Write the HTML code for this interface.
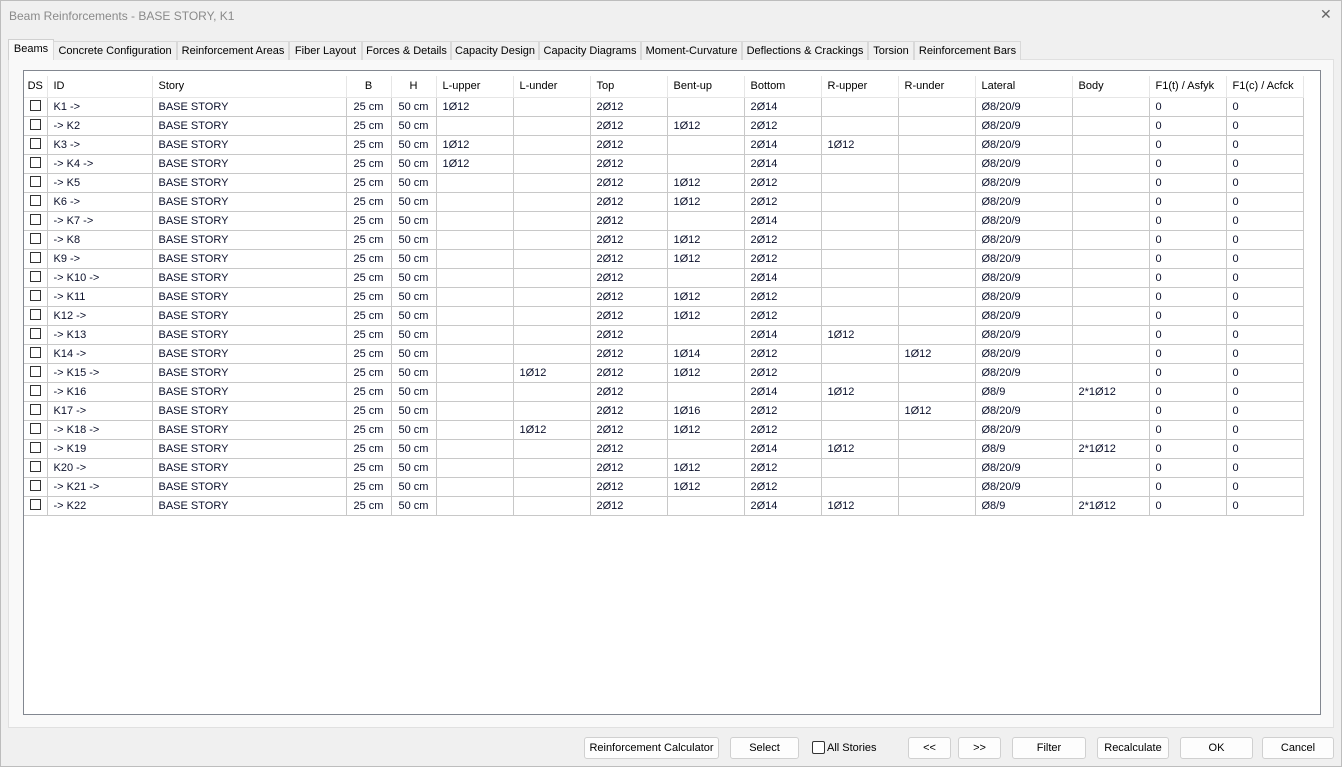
<!DOCTYPE html><html><head><style>
body{margin:0;width:1342px;height:767px;background:#f0f0f0;font-family:"Liberation Sans",sans-serif;font-size:11px;position:relative;overflow:hidden;color:#000}
.win{position:absolute;left:0;top:0;width:1340px;height:765px;border:1px solid #bdbdbd;background:#f0f0f0}
.title{position:absolute;left:9px;top:9px;font-size:12px;color:#8a8a8a}
.close{position:absolute;left:1320px;top:6px;font-size:14px;color:#666}
.tabs{position:absolute;top:40px;left:0;height:19px}
.tab{position:absolute;top:1px;height:18px;border:1px solid #d9d9d9;border-bottom:none;background:#f0f0f0;line-height:18px;text-align:center;white-space:nowrap;font-size:11px}
.tab.sel{top:-1px;height:20px;background:#f9f9f9;border-color:#d0d0d0}
.panel{position:absolute;left:8px;top:59px;width:1324px;height:667px;border:1px solid #e0e0e0;background:#f9f9f9}
.box{position:absolute;left:23px;top:70px;width:1296px;height:643px;border:1px solid #828790;background:#fff}
table{position:absolute;left:24px;top:76px;border-collapse:collapse;table-layout:fixed;color:#0a0f2a}
td{height:18px;padding:0 0 0 6px;border:1px solid #c8c8c8;white-space:nowrap;overflow:hidden;font-size:11px;line-height:18px}
tr.h td{border-color:#e6e6e6;border-top:none;height:21px;line-height:21px;color:#000}
td.c{text-align:center;padding:0}
td:first-child{border-left:none}
.cb{display:inline-block;width:9px;height:9px;border:1px solid #333;margin-top:2px;vertical-align:top}
tr.f td{border-top:1px dotted #000;border-bottom:1px dotted #000}
.btn{position:absolute;top:737px;height:20px;border:1px solid #d0d0d0;border-radius:3px;background:#fdfdfd;line-height:20px;text-align:center;font-size:11px}
</style></head><body><div class="win"></div>
<div class="title">Beam Reinforcements - BASE STORY, K1</div>
<div class="close">✕</div>
<div class="panel"></div>
<div class="tabs">
<div class="tab sel" style="left:8px;width:44px">Beams</div>
<div class="tab" style="left:53px;width:122px">Concrete Configuration</div>
<div class="tab" style="left:177px;width:110px">Reinforcement Areas</div>
<div class="tab" style="left:289px;width:71px">Fiber Layout</div>
<div class="tab" style="left:362px;width:87px">Forces &amp; Details</div>
<div class="tab" style="left:451px;width:86px">Capacity Design</div>
<div class="tab" style="left:539px;width:100px">Capacity Diagrams</div>
<div class="tab" style="left:641px;width:99px">Moment-Curvature</div>
<div class="tab" style="left:742px;width:124px">Deflections &amp; Crackings</div>
<div class="tab" style="left:868px;width:44px">Torsion</div>
<div class="tab" style="left:914px;width:105px">Reinforcement Bars</div>
</div>
<div class="box"></div>
<table>
<colgroup><col style="width:23px"><col style="width:105px"><col style="width:194px"><col style="width:45px"><col style="width:45px"><col style="width:77px"><col style="width:77px"><col style="width:77px"><col style="width:77px"><col style="width:77px"><col style="width:77px"><col style="width:77px"><col style="width:97px"><col style="width:77px"><col style="width:77px"><col style="width:77px"></colgroup>
<tr class="h"><td class="c">DS</td><td>ID</td><td>Story</td><td class="c">B</td><td class="c">H</td><td>L-upper</td><td>L-under</td><td>Top</td><td>Bent-up</td><td>Bottom</td><td>R-upper</td><td>R-under</td><td>Lateral</td><td>Body</td><td>F1(t) / Asfyk</td><td>F1(c) / Acfck</td></tr>
<tr class="f"><td class="c"><span class="cb"></span></td><td>K1 -&gt;</td><td>BASE STORY</td><td class="c">25 cm</td><td class="c">50 cm</td><td>1Ø12</td><td></td><td>2Ø12</td><td></td><td>2Ø14</td><td></td><td></td><td>Ø8/20/9</td><td></td><td>0</td><td>0</td></tr>
<tr><td class="c"><span class="cb"></span></td><td>-&gt; K2</td><td>BASE STORY</td><td class="c">25 cm</td><td class="c">50 cm</td><td></td><td></td><td>2Ø12</td><td>1Ø12</td><td>2Ø12</td><td></td><td></td><td>Ø8/20/9</td><td></td><td>0</td><td>0</td></tr>
<tr><td class="c"><span class="cb"></span></td><td>K3 -&gt;</td><td>BASE STORY</td><td class="c">25 cm</td><td class="c">50 cm</td><td>1Ø12</td><td></td><td>2Ø12</td><td></td><td>2Ø14</td><td>1Ø12</td><td></td><td>Ø8/20/9</td><td></td><td>0</td><td>0</td></tr>
<tr><td class="c"><span class="cb"></span></td><td>-&gt; K4 -&gt;</td><td>BASE STORY</td><td class="c">25 cm</td><td class="c">50 cm</td><td>1Ø12</td><td></td><td>2Ø12</td><td></td><td>2Ø14</td><td></td><td></td><td>Ø8/20/9</td><td></td><td>0</td><td>0</td></tr>
<tr><td class="c"><span class="cb"></span></td><td>-&gt; K5</td><td>BASE STORY</td><td class="c">25 cm</td><td class="c">50 cm</td><td></td><td></td><td>2Ø12</td><td>1Ø12</td><td>2Ø12</td><td></td><td></td><td>Ø8/20/9</td><td></td><td>0</td><td>0</td></tr>
<tr><td class="c"><span class="cb"></span></td><td>K6 -&gt;</td><td>BASE STORY</td><td class="c">25 cm</td><td class="c">50 cm</td><td></td><td></td><td>2Ø12</td><td>1Ø12</td><td>2Ø12</td><td></td><td></td><td>Ø8/20/9</td><td></td><td>0</td><td>0</td></tr>
<tr><td class="c"><span class="cb"></span></td><td>-&gt; K7 -&gt;</td><td>BASE STORY</td><td class="c">25 cm</td><td class="c">50 cm</td><td></td><td></td><td>2Ø12</td><td></td><td>2Ø14</td><td></td><td></td><td>Ø8/20/9</td><td></td><td>0</td><td>0</td></tr>
<tr><td class="c"><span class="cb"></span></td><td>-&gt; K8</td><td>BASE STORY</td><td class="c">25 cm</td><td class="c">50 cm</td><td></td><td></td><td>2Ø12</td><td>1Ø12</td><td>2Ø12</td><td></td><td></td><td>Ø8/20/9</td><td></td><td>0</td><td>0</td></tr>
<tr><td class="c"><span class="cb"></span></td><td>K9 -&gt;</td><td>BASE STORY</td><td class="c">25 cm</td><td class="c">50 cm</td><td></td><td></td><td>2Ø12</td><td>1Ø12</td><td>2Ø12</td><td></td><td></td><td>Ø8/20/9</td><td></td><td>0</td><td>0</td></tr>
<tr><td class="c"><span class="cb"></span></td><td>-&gt; K10 -&gt;</td><td>BASE STORY</td><td class="c">25 cm</td><td class="c">50 cm</td><td></td><td></td><td>2Ø12</td><td></td><td>2Ø14</td><td></td><td></td><td>Ø8/20/9</td><td></td><td>0</td><td>0</td></tr>
<tr><td class="c"><span class="cb"></span></td><td>-&gt; K11</td><td>BASE STORY</td><td class="c">25 cm</td><td class="c">50 cm</td><td></td><td></td><td>2Ø12</td><td>1Ø12</td><td>2Ø12</td><td></td><td></td><td>Ø8/20/9</td><td></td><td>0</td><td>0</td></tr>
<tr><td class="c"><span class="cb"></span></td><td>K12 -&gt;</td><td>BASE STORY</td><td class="c">25 cm</td><td class="c">50 cm</td><td></td><td></td><td>2Ø12</td><td>1Ø12</td><td>2Ø12</td><td></td><td></td><td>Ø8/20/9</td><td></td><td>0</td><td>0</td></tr>
<tr><td class="c"><span class="cb"></span></td><td>-&gt; K13</td><td>BASE STORY</td><td class="c">25 cm</td><td class="c">50 cm</td><td></td><td></td><td>2Ø12</td><td></td><td>2Ø14</td><td>1Ø12</td><td></td><td>Ø8/20/9</td><td></td><td>0</td><td>0</td></tr>
<tr><td class="c"><span class="cb"></span></td><td>K14 -&gt;</td><td>BASE STORY</td><td class="c">25 cm</td><td class="c">50 cm</td><td></td><td></td><td>2Ø12</td><td>1Ø14</td><td>2Ø12</td><td></td><td>1Ø12</td><td>Ø8/20/9</td><td></td><td>0</td><td>0</td></tr>
<tr><td class="c"><span class="cb"></span></td><td>-&gt; K15 -&gt;</td><td>BASE STORY</td><td class="c">25 cm</td><td class="c">50 cm</td><td></td><td>1Ø12</td><td>2Ø12</td><td>1Ø12</td><td>2Ø12</td><td></td><td></td><td>Ø8/20/9</td><td></td><td>0</td><td>0</td></tr>
<tr><td class="c"><span class="cb"></span></td><td>-&gt; K16</td><td>BASE STORY</td><td class="c">25 cm</td><td class="c">50 cm</td><td></td><td></td><td>2Ø12</td><td></td><td>2Ø14</td><td>1Ø12</td><td></td><td>Ø8/9</td><td>2*1Ø12</td><td>0</td><td>0</td></tr>
<tr><td class="c"><span class="cb"></span></td><td>K17 -&gt;</td><td>BASE STORY</td><td class="c">25 cm</td><td class="c">50 cm</td><td></td><td></td><td>2Ø12</td><td>1Ø16</td><td>2Ø12</td><td></td><td>1Ø12</td><td>Ø8/20/9</td><td></td><td>0</td><td>0</td></tr>
<tr><td class="c"><span class="cb"></span></td><td>-&gt; K18 -&gt;</td><td>BASE STORY</td><td class="c">25 cm</td><td class="c">50 cm</td><td></td><td>1Ø12</td><td>2Ø12</td><td>1Ø12</td><td>2Ø12</td><td></td><td></td><td>Ø8/20/9</td><td></td><td>0</td><td>0</td></tr>
<tr><td class="c"><span class="cb"></span></td><td>-&gt; K19</td><td>BASE STORY</td><td class="c">25 cm</td><td class="c">50 cm</td><td></td><td></td><td>2Ø12</td><td></td><td>2Ø14</td><td>1Ø12</td><td></td><td>Ø8/9</td><td>2*1Ø12</td><td>0</td><td>0</td></tr>
<tr><td class="c"><span class="cb"></span></td><td>K20 -&gt;</td><td>BASE STORY</td><td class="c">25 cm</td><td class="c">50 cm</td><td></td><td></td><td>2Ø12</td><td>1Ø12</td><td>2Ø12</td><td></td><td></td><td>Ø8/20/9</td><td></td><td>0</td><td>0</td></tr>
<tr><td class="c"><span class="cb"></span></td><td>-&gt; K21 -&gt;</td><td>BASE STORY</td><td class="c">25 cm</td><td class="c">50 cm</td><td></td><td></td><td>2Ø12</td><td>1Ø12</td><td>2Ø12</td><td></td><td></td><td>Ø8/20/9</td><td></td><td>0</td><td>0</td></tr>
<tr><td class="c"><span class="cb"></span></td><td>-&gt; K22</td><td>BASE STORY</td><td class="c">25 cm</td><td class="c">50 cm</td><td></td><td></td><td>2Ø12</td><td></td><td>2Ø14</td><td>1Ø12</td><td></td><td>Ø8/9</td><td>2*1Ø12</td><td>0</td><td>0</td></tr>
</table>
<div class="btn" style="left:584px;width:133px">Reinforcement Calculator</div>
<div class="btn" style="left:730px;width:67px">Select</div>
<div style="position:absolute;left:812px;top:741px;width:11px;height:11px;border:1px solid #333;border-radius:2px;background:#fff"></div>
<div style="position:absolute;left:827px;top:742px;font-size:11px">All Stories</div>
<div class="btn" style="left:908px;width:41px">&lt;&lt;</div>
<div class="btn" style="left:958px;width:41px">&gt;&gt;</div>
<div class="btn" style="left:1012px;width:72px">Filter</div>
<div class="btn" style="left:1097px;width:70px">Recalculate</div>
<div class="btn" style="left:1180px;width:71px">OK</div>
<div class="btn" style="left:1262px;width:70px">Cancel</div>
</body></html>
